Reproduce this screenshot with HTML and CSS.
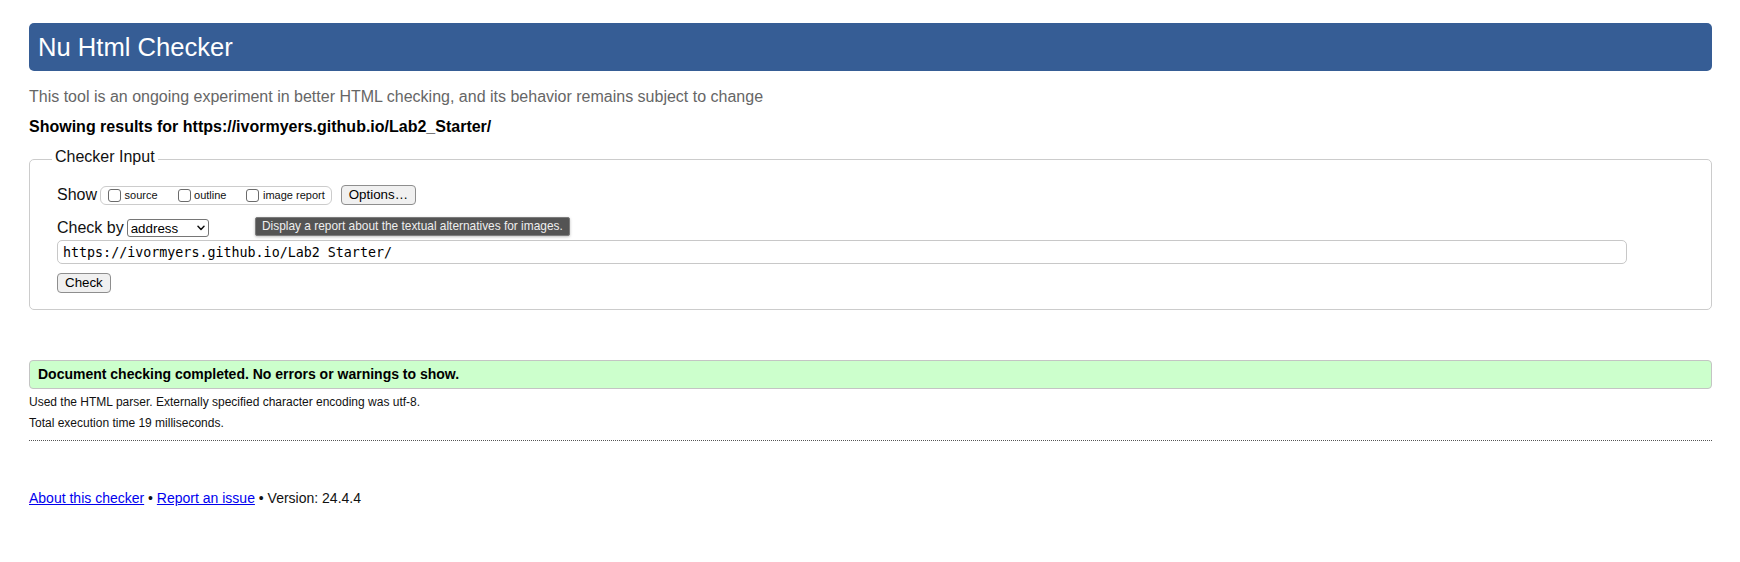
FILE: index.html
```html
<!DOCTYPE html>
<html lang="en">
<head>
<meta charset="utf-8">
<title>Showing results for https://ivormyers.github.io/Lab2_Starter/ - Nu Html Checker</title>
<link rel="stylesheet" href="styles.css">
</head>
<body>
<h1 class="title">Nu Html Checker</h1>
<p class="intro">This tool is an ongoing experiment in better HTML checking, and its behavior remains subject to change</p>
<p class="results-for">Showing results for https://ivormyers.github.io/Lab2_Starter/</p>
<form class="checker-form">
  <fieldset class="checker-input">
    <legend class="legend">Checker Input</legend>
    <div class="row row-show">
      <span class="row-label">Show</span>
      <span class="show-options">
        <label class="opt"><input type="checkbox" class="cb"><span>source</span></label>
        <label class="opt"><input type="checkbox" class="cb"><span>outline</span></label>
        <label class="opt"><input type="checkbox" class="cb"><span>image report</span></label>
        <span class="tooltip">Display a report about the textual alternatives for images.</span>
      </span>
      <button type="button" class="btn btn-options">Options…</button>
    </div>
    <div class="row row-checkby">
      <label class="row-label" for="docselect">Check by</label>
      <span class="select-wrap">
        <select id="docselect" class="select"><option>address</option></select>
        <svg class="chev" width="8" height="6" viewBox="0 0 8 6" aria-hidden="true"><path d="M1 1.2 L4 4.4 L7 1.2" fill="none" stroke="#111" stroke-width="1.5" stroke-linecap="round" stroke-linejoin="round"/></svg>
      </span>
    </div>
    <input class="url" type="url" value="https://ivormyers.github.io/Lab2_Starter/">
    <div class="row-submit"><button type="button" class="btn btn-check">Check</button></div>
  </fieldset>
</form>
<p class="success">Document checking completed. No errors or warnings to show.</p>
<p class="details">Used the HTML parser. Externally specified character encoding was utf-8.</p>
<p class="details">Total execution time 19 milliseconds.</p>
<hr class="rule">
<p class="footer"><a href="#" class="link">About this checker</a> • <a href="#" class="link">Report an issue</a> • Version: 24.4.4</p>
</body>
</html>
```
FILE: styles.css
```css
* { box-sizing: border-box; }
html { background: #fff; }
body {
  margin: 0;
  padding: 23px 28px 40px 29px;
  font-family: "Liberation Sans", Arial, Helvetica, sans-serif;
  font-size: 16px;
  color: #111;
}
.title {
  margin: 0;
  height: 48px;
  padding: 0 9px;
  background: #365d95;
  color: #fff;
  border-radius: 5px;
  font-size: 25.6px;
  font-weight: normal;
  line-height: 48px;
}
.intro {
  margin: 17px 0 0;
  color: #666;
  line-height: 18px;
}
.results-for {
  margin: 12px 0 0;
  font-weight: bold;
  line-height: 18px;
  color: #000;
}
.checker-form { margin: 12px 0 0; }
.checker-input {
  margin: 0;
  min-width: 0;
  border: 1px solid #ccc;
  border-radius: 5px;
  padding: 15px 0 16px 27px;
}
.legend {
  margin-left: -5px;
  padding: 0 3px 4px;
  line-height: 18px;
  color: #111;
}
.row {
  display: flex;
  align-items: center;
}
.row-show { height: 20px; }
.row-label { line-height: 20px; }
.show-options {
  position: relative;
  display: flex;
  align-items: center;
  gap: 20px;
  height: 19px;
  margin-left: 3px;
  padding: 0 6px 0 7px;
  border: 1px solid #ccc;
  border-radius: 6px;
  font-size: 11px;
}
.opt {
  display: flex;
  align-items: center;
  gap: 3.5px;
}
.cb {
  appearance: none;
  -webkit-appearance: none;
  width: 13px;
  height: 13px;
  margin: 0;
  border: 1px solid #6b6b6b;
  border-radius: 3px;
  background: #fff;
}
.tooltip {
  position: absolute;
  left: 154px;
  top: 30px;
  height: 19px;
  padding: 0 6px;
  background: #545454;
  border: 1px solid #7c7c7c;
  border-radius: 2px;
  color: #efefef;
  font-size: 11.9px;
  line-height: 17px;
  white-space: nowrap;
  box-shadow: 0 1px 3px rgba(0,0,0,0.25);
  z-index: 2;
}
.btn {
  height: 20px;
  padding: 0 6px;
  background: #f0f0f0;
  border: 1px solid #8e8e8e;
  border-radius: 4px;
  font-family: "Liberation Sans", Arial, sans-serif;
  font-size: 13.33px;
  color: #000;
  line-height: 18px;
}
.btn-options { margin-left: 9px; padding: 0 7px; }
.btn-check { padding: 0 7px; }
.row-checkby {
  height: 18px;
  margin-top: 14px;
}
.select-wrap {
  display: flex;
  align-items: center;
  margin-left: 3px;
}
.select {
  appearance: none;
  -webkit-appearance: none;
  width: 82px;
  height: 18px;
  margin: 0;
  padding: 0 0 0 3px;
  border: 1px solid #767676;
  border-radius: 3px;
  background: #fff;
  font-family: "Liberation Sans", Arial, sans-serif;
  font-size: 13.33px;
  color: #000;
}
.chev {
  margin-left: -12px;
  pointer-events: none;
}
.url {
  display: block;
  width: 1570px;
  height: 24px;
  margin: 3px 0 0;
  padding: 0 5px;
  border: 1px solid #c8c8c8;
  border-radius: 5px;
  font-family: "DejaVu Sans Mono", "Liberation Mono", monospace;
  font-size: 13.33px;
  line-height: 22px;
  color: #000;
  background: #fff;
}
.row-submit { margin-top: 9px; }
.success {
  margin: 50px 0 0;
  padding: 0 8px;
  background: #ccffcc;
  border: 1px solid #c4c4c4;
  border-radius: 4px;
  font-size: 14px;
  font-weight: bold;
  line-height: 27px;
  color: #000;
}
.details {
  margin: 3px 0 0;
  font-size: 12px;
  line-height: 21px;
}
.details + .details { margin-top: 0; }
.rule {
  margin: 6px 0 0;
  height: 0;
  border: 0;
  border-top: 1px dotted #555;
}
.footer {
  margin: 47px 0 0;
  font-size: 14px;
  line-height: 20px;
}
.link { color: #0000ee; text-decoration: underline; }
```
